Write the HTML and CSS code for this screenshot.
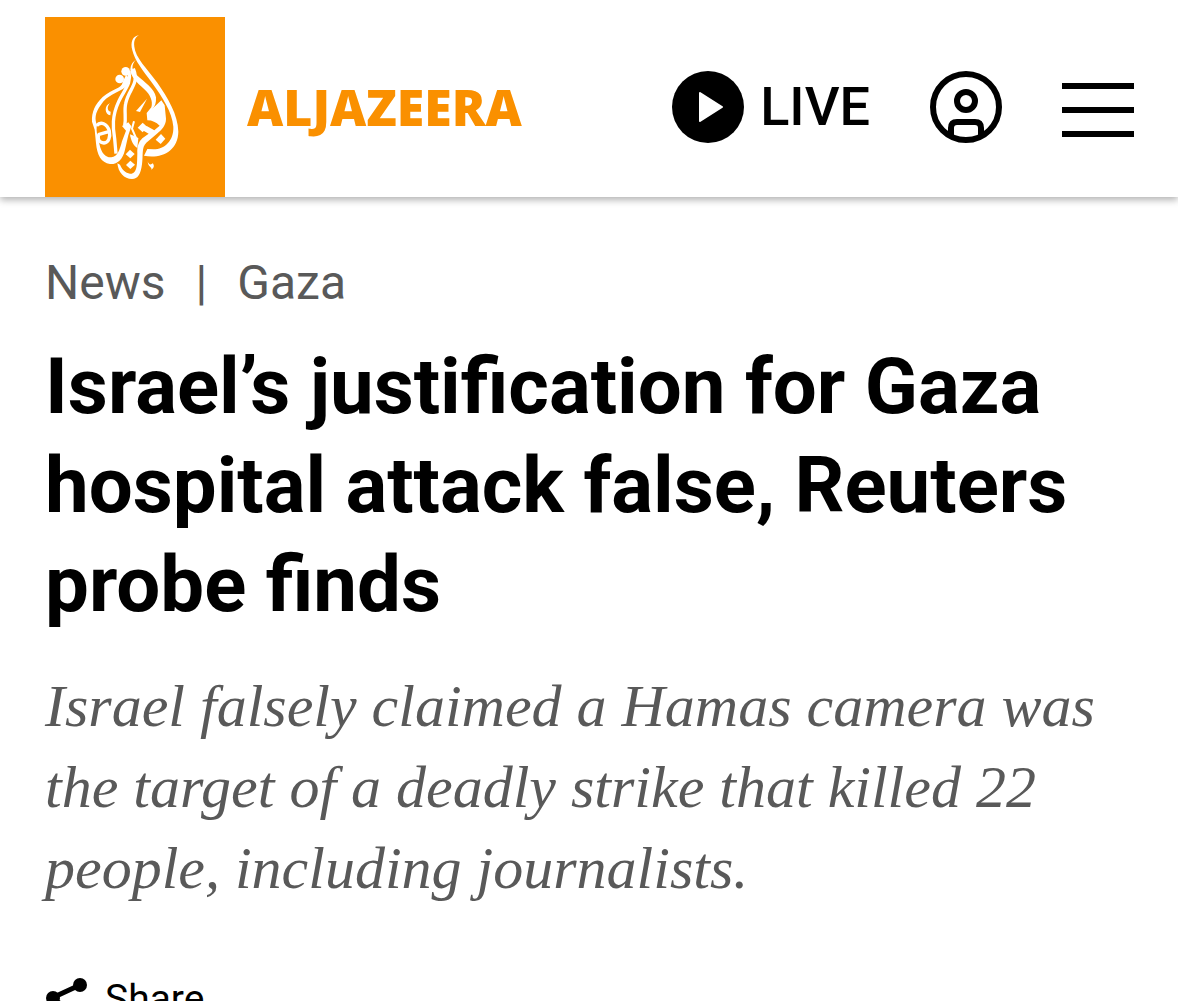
FILE: index.html
```html
<!DOCTYPE html>
<html lang="en">
<head>
  <meta charset="UTF-8">
  <title>Israel’s justification for Gaza hospital attack false, Reuters probe finds</title>
  <meta name="viewport" content="width=device-width, initial-scale=1">
  <link rel="stylesheet" href="styles.css">
</head>
<body>

  <header class="site-header">
    <a class="brand" href="#" aria-label="Al Jazeera home">
      <svg class="brand-logo" viewBox="15 21 540 540" aria-hidden="true">
        <rect x="15" y="21" width="540" height="540" fill="#fa9000"/>
        <g fill="#fff">
          <!-- right side of the flame -->
          <path d="M297 76C278 77 270 98 277 121C284 152 309 182 337 220C367 262 396 306 400 350C402 392 373 418 341 418L322 417L312 437C362 447 414 425 415 365C414 313 383 263 352 218C320 174 286 143 283 110C281 92 285 82 297 76Z"/>
          <!-- dots -->
          <circle cx="239" cy="207" r="13"/>
          <circle cx="257" cy="184" r="13"/>
          <path d="M308 338L322 351L308 367L293 353Z"/>
          <path d="M363 372L376 386L362 402L347 389Z"/>
          <path d="M270 419L284 432L271 445L257 433Z"/>
          <path d="M271 452L285 464L271 477L258 465Z"/>
          <path d="M323 454C325 464 333 466 338 460C344 466 342 475 334 479C337 470 325 474 323 454Z"/>
          <path d="M211 279C191 286 194 314 211 316L212 305C200 303 201 287 211 279Z"/>
          <path d="M321 266L288 303L300 306Z"/>
          <!-- inner right letters -->
          <path d="M289 148C273 165 274 181 290 195C314 217 343 235 348 262C349 278 345 290 337 296L364 271L374 286L378 326C378 346 366 358 350 372L319 398C304 412 310 436 306 463C302 493 294 507 276 507C252 507 235 488 232 460L240 464C248 484 262 491 275 491C293 487 291 459 292 430C291 408 296 396 307 385L326 371L308 361L320 348L343 361L359 347C348 337 337 331 322 331L320 309L334 292C340 274 330 253 313 238C292 219 270 199 271 178C272 164 279 155 289 148Z"/>
          <!-- left outline -->
          <path d="M258 195C272 203 269 221 256 232C229 251 201 256 183 284C164 309 164 328 171 345C167 364 174 381 178 401C184 430 197 443 214 442C233 440 239 420 246 394L258 362L246 348L265 337L274 349L265 376L255 419C248 449 233 463 210 462C183 459 171 434 168 400L164 359L156 335C154 306 166 282 188 261C218 235 246 236 248 216Z"/>
          <path d="M270 373L281 377L295 384L292 414C280 407 272 391 270 373Z"/>
        </g>
        <g fill="none" stroke="#fff" stroke-width="10">
          <path d="M267 184C275 223 252 239 236 275C216 318 218 352 224 386L228 431"/>
          <path d="M280 176C299 224 266 235 257 281C252 303 259 322 254 347"/>
          <path d="M282 334L276 356L288 384" stroke-width="6"/>
          <path d="M170 347C182 333 201 341 208 363C212 383 205 398 192 399C177 398 170 385 177 373L206 365"/>
        </g>
      </svg>
      <span class="brand-name">ALJAZEERA</span>
    </a>

    <nav class="header-actions">
      <a class="live-link" href="#">
        <svg class="icon" viewBox="0 0 72 72" aria-hidden="true">
          <circle cx="36" cy="36" r="36"/>
          <path d="M28 22L50 36L28 50Z" fill="#fff" stroke="#fff" stroke-width="2" stroke-linejoin="round"/>
        </svg>
        <span>LIVE</span>
      </a>
      <button class="icon-button" type="button" aria-label="Account">
        <svg class="icon" viewBox="0 0 72 72" fill="none" stroke="#000" stroke-width="6" aria-hidden="true">
          <circle cx="36" cy="36" r="33"/>
          <circle cx="36" cy="30" r="9"/>
          <path d="M21 65V57Q21 51 27 51H45Q51 51 51 57V65"/>
        </svg>
      </button>
      <button class="icon-button" type="button" aria-label="Menu">
        <svg class="icon" viewBox="0 0 72 72" aria-hidden="true">
          <path d="M0 12H72V18H0ZM0 36H72V42H0ZM0 60H72V66H0Z"/>
        </svg>
      </button>
    </nav>
  </header>

  <main class="article">
    <nav class="topics">
      <a href="#">News</a>
      <span class="divider">|</span>
      <a href="#">Gaza</a>
    </nav>
    <h1>Israel’s justification for Gaza hospital attack false, Reuters probe finds</h1>
    <p class="summary">Israel falsely claimed a Hamas camera was the target of a deadly strike that killed 22 people, including journalists.</p>
    <button class="share" type="button">
      <svg class="share-icon" viewBox="0 0 42 48" aria-hidden="true">
        <path d="M35 8L7 21L35 40" fill="none" stroke="#000" stroke-width="5"/>
        <circle cx="35" cy="8" r="7"/>
        <circle cx="8" cy="21" r="7"/>
        <circle cx="35" cy="40" r="7"/>
      </svg>
      Share
    </button>
  </main>

</body>
</html>
```
FILE: styles.css
```css
body {
  margin: 0;
  font-family: Roboto, Arial, sans-serif;
  color: #000;
  background-color: #fff;
  overflow: hidden;
}

a {
  color: inherit;
  text-decoration: none;
}

button {
  padding: 0;
  border: none;
  background: none;
  font-family: inherit;
  color: inherit;
  cursor: pointer;
}

.site-header {
  display: flex;
  justify-content: space-between;
  padding: 17px 44px 0 45px;
  box-shadow: 0 3px 7px rgba(0, 0, 0, 0.3);
}

.brand {
  display: flex;
  align-items: center;
  gap: 22px;
}

.brand-logo {
  display: block;
  width: 180px;
  height: 180px;
}

.brand-name {
  font-family: "Noto Sans", "Open Sans", sans-serif;
  font-size: 50px;
  font-weight: 900;
  color: #fa9000;
}

.header-actions {
  display: flex;
  align-items: center;
  gap: 60px;
}

.icon {
  display: block;
  width: 72px;
  height: 72px;
}

.live-link {
  display: flex;
  align-items: center;
  gap: 16px;
  font-size: 54px;
  line-height: 60px;
  font-weight: 500;
}

.article {
  padding: 48px 45px 0;
}

.topics {
  display: flex;
  gap: 30px;
  font-size: 48px;
  line-height: 76px;
  color: #595959;
}

h1 {
  margin: 16px 0 0;
  font-size: 78px;
  font-weight: 700;
  line-height: 99px;
}

.summary {
  margin: 32px 0 0;
  font-family: Georgia, "Liberation Serif", serif;
  font-size: 60px;
  font-style: italic;
  line-height: 81px;
  color: #595959;
}

.share {
  display: flex;
  gap: 18px;
  margin-top: 68px;
  font-size: 39px;
  line-height: 45px;
}

.share-icon {
  width: 42px;
  height: 48px;
}
```
